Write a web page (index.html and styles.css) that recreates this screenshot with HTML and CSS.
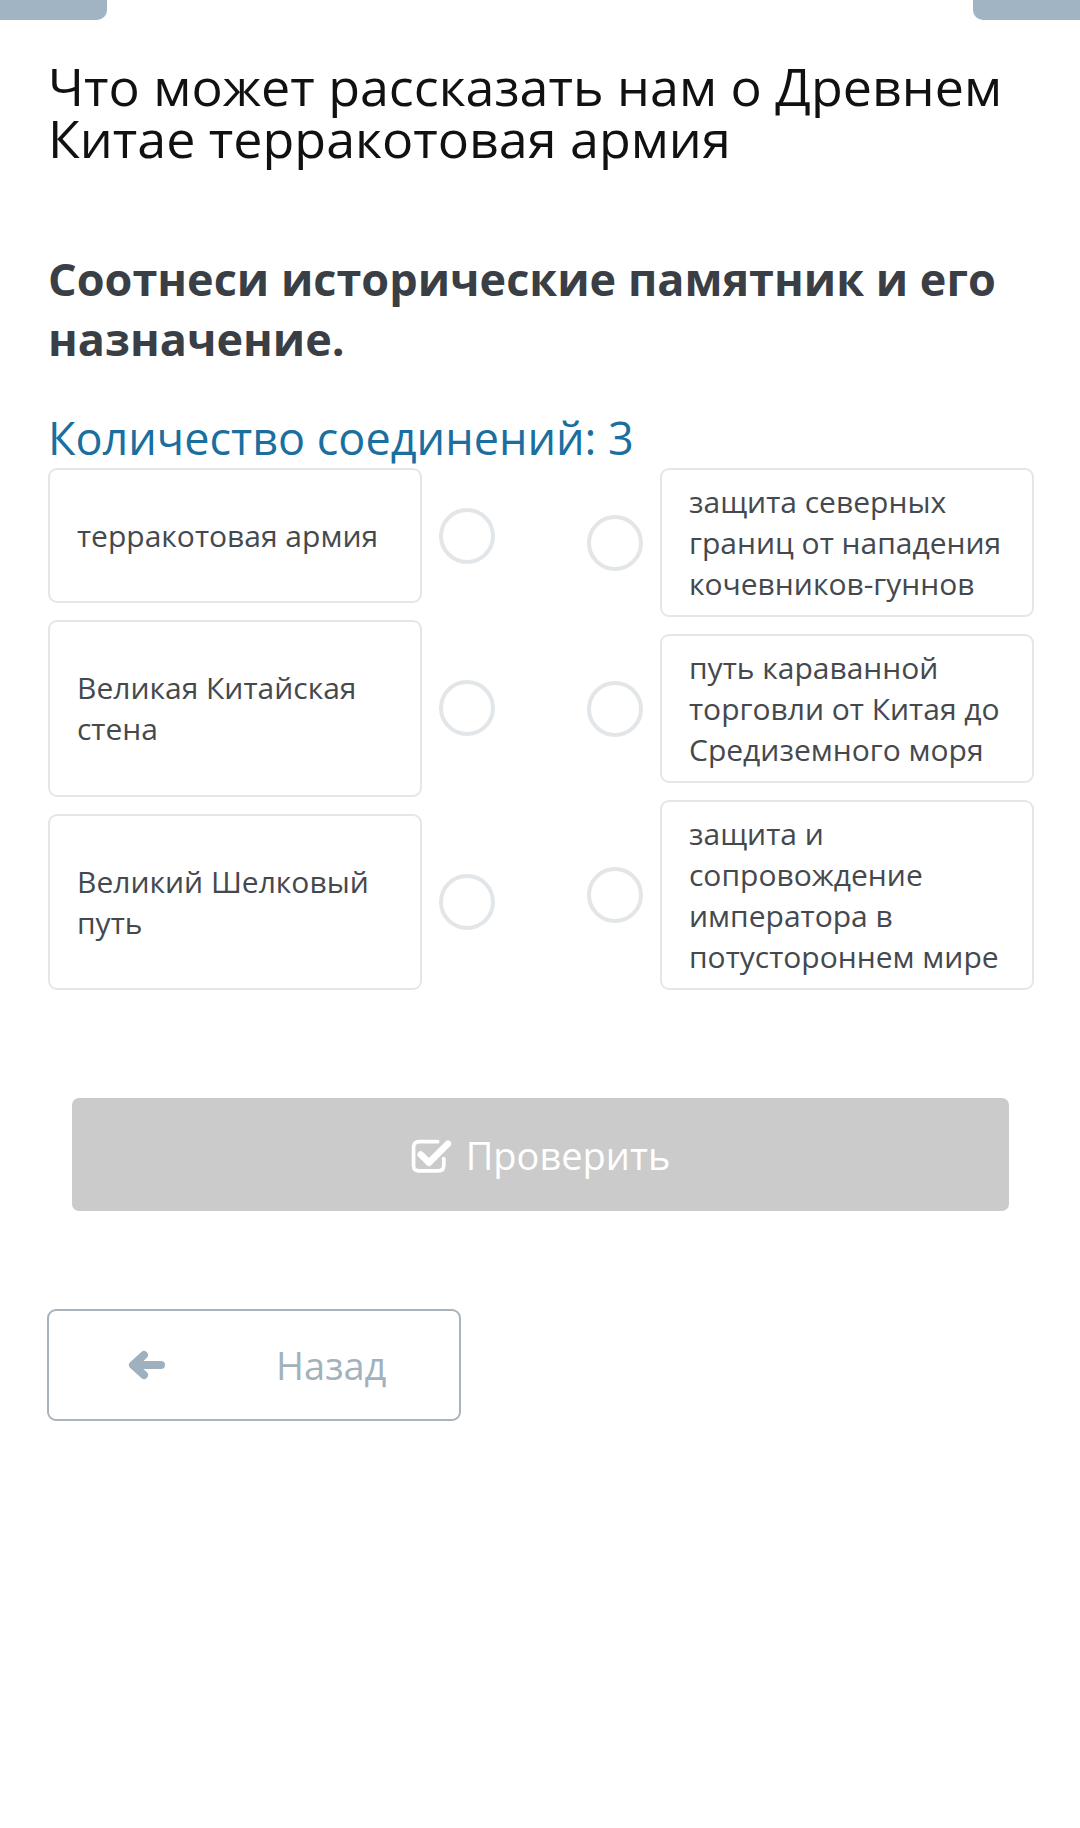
FILE: index.html
```html
<!DOCTYPE html>
<html lang="ru">
<head>
<meta charset="utf-8">
<title>Соотнеси</title>
<link rel="stylesheet" href="styles.css">
</head>
<body>
<div class="tabs"><span class="tab tab-left"></span><span class="tab tab-right"></span></div>
<main class="content">
  <h1 class="title">Что может рассказать нам о Древнем Китае терракотовая армия</h1>
  <h2 class="task">Соотнеси исторические памятник и его назначение.</h2>
  <p class="count">Количество соединений: 3</p>
  <div class="match">
    <div class="col col-left">
      <div class="row"><div class="card"><span>терракотовая армия</span></div><span class="dot dot-left"></span></div>
      <div class="row"><div class="card"><span>Великая Китайская стена</span></div><span class="dot dot-left"></span></div>
      <div class="row"><div class="card"><span>Великий Шелковый путь</span></div><span class="dot dot-left"></span></div>
    </div>
    <div class="col col-right">
      <div class="row"><span class="dot dot-right"></span><div class="card"><span>защита северных границ от нападения кочевников-гуннов</span></div></div>
      <div class="row"><span class="dot dot-right"></span><div class="card"><span>путь караванной торговли от Китая до Средиземного моря</span></div></div>
      <div class="row"><span class="dot dot-right"></span><div class="card"><span>защита и сопровождение императора в потустороннем мире</span></div></div>
    </div>
  </div>
  <button class="check" type="button">
    <svg class="check-icon" viewBox="0 0 40 36" width="41" height="37" aria-hidden="true">
      <path d="M26 5.5 H8 Q2.5 5.5 2.5 11 V29 Q2.5 34 8 34 H26.5 Q32 34 32 28.5 V22" fill="none" stroke="#fff" stroke-width="3.6" stroke-linecap="round"/>
      <path d="M9.5 18 L17.5 26 L36 7.5" fill="none" stroke="#fff" stroke-width="6.5" stroke-linecap="round" stroke-linejoin="round"/>
    </svg>
    <span>Проверить</span>
  </button>
  <button class="back" type="button">
    <svg class="back-icon" viewBox="0 0 40 32" width="40" height="32" aria-hidden="true">
      <path d="M35 16 H9 M18 6 L7 16 L18 26" fill="none" stroke="#9fb1bf" stroke-width="8" stroke-linecap="round" stroke-linejoin="round"/>
    </svg>
    <span>Назад</span>
  </button>
</main>
</body>
</html>
```
FILE: styles.css
```css
* { box-sizing: border-box; }
html, body { margin: 0; padding: 0; background: #fff; }
body { font-family: "Open Sans", "Noto Sans", sans-serif; color: #45494e; }

.tabs { display: flex; justify-content: space-between; height: 20px; }
.tab { display: block; width: 107px; height: 20px; background: #a1b4c3; }
.tab-left { border-bottom-right-radius: 10px; }
.tab-right { border-bottom-left-radius: 10px; }

.content { padding: 0 46px 0 48px; }

.title {
  margin: 40px 0 0;
  font-size: 52px;
  line-height: 52px;
  font-weight: 400;
  color: #111;
}
.task {
  margin: 85px 0 0;
  font-size: 45px;
  line-height: 60px;
  font-weight: 700;
  color: #3a3e45;
}
.count {
  margin: 44px 0 0;
  font-size: 45px;
  line-height: 50px;
  color: #1b6f9f;
}

.match {
  margin-top: 5px;
  display: flex;
  justify-content: space-between;
}
.col { display: flex; flex-direction: column; width: 447px; }
.col-left { gap: 17px; }
.col-right { gap: 17px; }
.col-left .row { flex: 1 1 auto; display: flex; align-items: stretch; }
.col-right .row { display: flex; align-items: center; }

.card {
  width: 374px;
  flex: 0 0 374px;
  display: flex;
  align-items: center;
  border: 2px solid #e6e6e6;
  border-radius: 9px;
  padding: 11px 22px 11px 27px;
  font-size: 30px;
  line-height: 41px;
  color: #45494e;
  background: #fff;
}

.dot {
  flex: 0 0 56px;
  width: 56px;
  height: 56px;
  border: 4.5px solid #e2e6e9;
  border-radius: 50%;
}
.dot-left { align-self: center; margin-left: 17px; }
.dot-right { margin-right: 17px; }

.check {
  display: flex;
  align-items: center;
  justify-content: center;
  gap: 14px;
  width: calc(100% - 49px);
  margin: 108px 0 0 24px;
  height: 113px;
  border: none;
  border-radius: 7px;
  background: #cbcbcb;
  color: #fff;
  font-family: "Open Sans", "Noto Sans", sans-serif;
  font-size: 38px;
  padding: 0;
}
.check-icon { display: block; }

.back {
  display: flex;
  align-items: center;
  width: 414px;
  height: 112px;
  margin: 98px 0 0 -1px;
  padding: 0 0 0 77px;
  border: 2px solid #aab3b9;
  border-radius: 9px;
  background: #fff;
  color: #a2b2bd;
  font-family: "Open Sans", "Noto Sans", sans-serif;
  font-size: 38px;
  gap: 110px;
}
.back-icon { display: block; }
```
